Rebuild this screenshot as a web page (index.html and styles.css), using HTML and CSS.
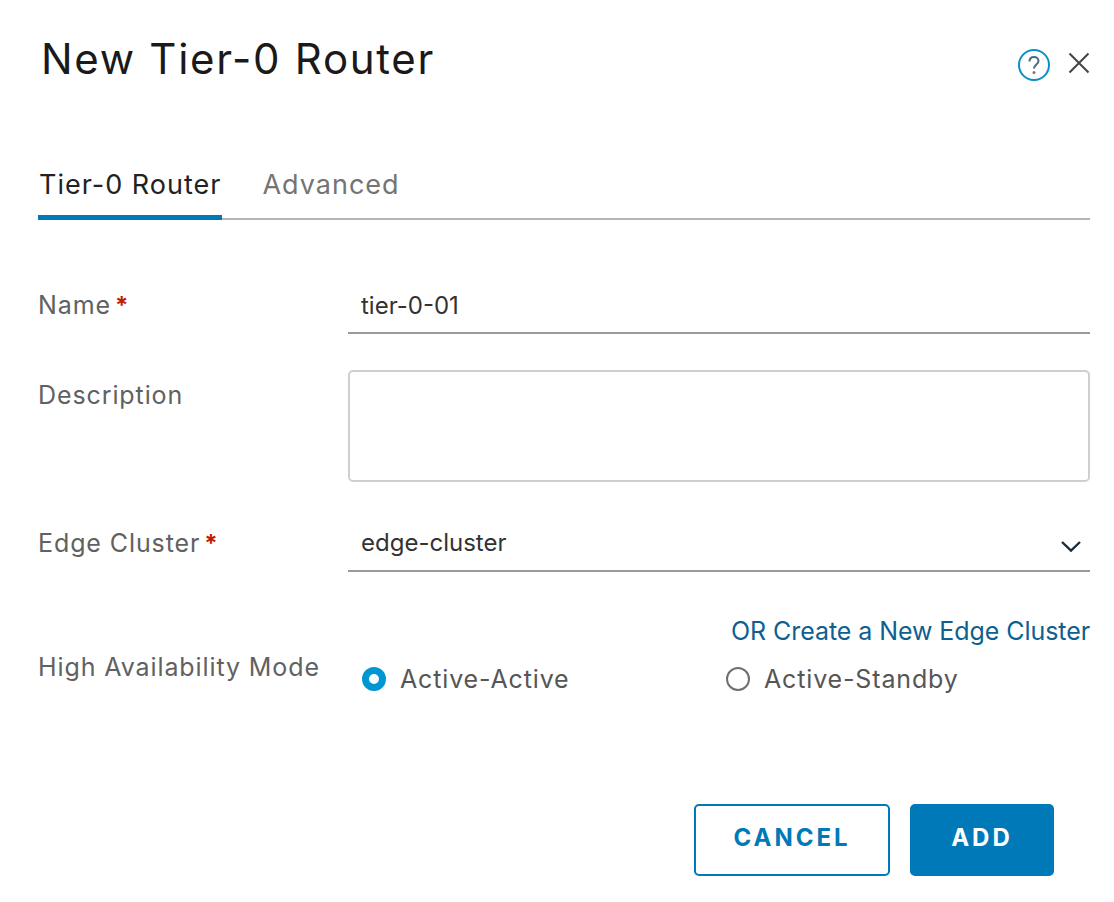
FILE: index.html
```html
<!DOCTYPE html>
<html lang="en">
<head>
    <meta charset="UTF-8">
    <title>New Tier-0 Router</title>
    <link rel="stylesheet" href="styles.css">
</head>
<body>
    <div class="modal">
        <div class="modal-header">
            <h1>New Tier-0 Router</h1>
            <div class="header-icons">
                <svg class="help-icon" width="34" height="34" viewBox="0 0 34 34" fill="none">
                    <circle cx="17" cy="17" r="15" stroke="#0a8fc9" stroke-width="2"/>
                    <path d="M12.5 13.5c0-3 2-4.500 4.500-4.500s4.500 1.600 4.500 4c0 3.500-4.500 3.500-4.500 7.500" stroke="#4a6a80" stroke-width="2"/>
                    <circle cx="17" cy="24.500" r="1.500" fill="#8a6a90"/>
                </svg>
                <svg class="close-icon" width="24" height="24" viewBox="0 0 24 24" fill="none">
                    <path d="M2.500 2.500l19 19M21.500 2.500l-19 19" stroke="#444" stroke-width="2"/>
                </svg>
            </div>
        </div>

        <div class="tabs">
            <div class="tab active">Tier-0 Router</div>
            <div class="tab">Advanced</div>
        </div>

        <form class="router-form">
            <div class="form-row name-row">
                <label>Name<span class="req">*</span></label>
                <div class="field">tier-0-01</div>
            </div>
            <div class="form-row desc-row">
                <label>Description</label>
                <div class="textarea"></div>
            </div>
            <div class="form-row cluster-row">
                <label>Edge Cluster<span class="req">*</span></label>
                <div class="field select-field">
                    <span>edge-cluster</span>
                    <svg width="22" height="14" viewBox="0 0 22 14" fill="none">
                        <path d="M2 3l9 8.500L20 3" stroke="#1c2a38" stroke-width="2.400"/>
                    </svg>
                </div>
            </div>
            <div class="create-link"><a>OR Create a New Edge Cluster</a></div>
            <div class="form-row ha-row">
                <label>High Availability Mode</label>
                <div class="radio-group">
                    <div class="radio-item first">
                        <span class="radio checked"></span>
                        <span>Active-Active</span>
                    </div>
                    <div class="radio-item">
                        <span class="radio"></span>
                        <span>Active-Standby</span>
                    </div>
                </div>
            </div>
            <div class="buttons">
                <button type="button" class="btn btn-outline">CANCEL</button>
                <button type="button" class="btn btn-primary">ADD</button>
            </div>
        </form>
    </div>
</body>
</html>
```

FILE: styles.css
```css
* {
    box-sizing: border-box;
    margin: 0;
    padding: 0;
}

body {
    font-family: 'Inter', 'Noto Sans', sans-serif;
    background-color: #ffffff;
    color: #565656;
}

.modal {
    width: 1114px;
    height: 902px;
    padding: 30px 24px 0 38px;
}

/* Header */
.modal-header {
    display: flex;
    justify-content: space-between;
    align-items: flex-start;
    height: 124px;
}

h1 {
    font-size: 42px;
    font-weight: 400;
    line-height: 58px;
    letter-spacing: 1.7px;
    color: #1a1a1a;
    padding-left: 3px;
}

.header-icons {
    display: flex;
    align-items: center;
    gap: 16px;
    margin-top: 18px;
    margin-right: -1px;
}

.close-icon {
    margin-top: -4px;
}

/* Tabs */
.tabs {
    display: flex;
    gap: 40px;
    height: 66px;
    border-bottom: 2px solid #b5b5b5;
}

.tab {
    font-size: 27px;
    line-height: 62px;
    letter-spacing: 1px;
    color: #747474;
}

.tab.active {
    color: #222222;
    height: 66px;
    padding: 0 1px;
    border-bottom: 5px solid #0079b8;
}

/* Form */
.router-form {
    padding-top: 64px;
}

.form-row {
    display: flex;
}

label {
    width: 310px;
    flex-shrink: 0;
    font-size: 25px;
    line-height: 42px;
    letter-spacing: 0.9px;
    color: #616161;
}

.req {
    color: #c21d00;
    margin-left: 4px;
    font-size: 24px;
    font-weight: 700;
}

.field {
    flex: 1;
    height: 50px;
    padding: 0 13px;
    font-size: 24px;
    line-height: 44px;
    color: #333333;
    border-bottom: 2px solid #9a9a9a;
}

.select-field {
    display: flex;
    justify-content: space-between;
    align-items: center;
    padding-right: 8px;
}

.select-field span {
    margin-top: -6px;
}

.desc-row {
    margin-top: 36px;
}

.desc-row label {
    padding-top: 4px;
}

.textarea {
    flex: 1;
    height: 112px;
    border: 2px solid #cfcfcf;
    border-radius: 5px;
}

.cluster-row {
    margin-top: 40px;
}

.create-link {
    text-align: right;
    margin-top: 37px;
    font-size: 25px;
    line-height: 44px;
    letter-spacing: -0.07px;
    color: #0f5f8f;
}

.ha-row {
    margin-top: -8px;
}

.ha-row label {
    padding-top: 1px;
}

.radio-group {
    display: flex;
    flex: 1;
    padding-top: 12px;
}

.radio-item {
    display: flex;
    align-items: center;
    gap: 14px;
    height: 44px;
    font-size: 25px;
    letter-spacing: 0.85px;
    color: #565656;
}

.radio-item.first {
    width: 378px;
    padding-left: 14px;
}

.radio {
    width: 24px;
    height: 24px;
    border: 2px solid #6f6f6f;
    border-radius: 50%;
}

.radio.checked {
    border: 7px solid #0095d3;
}

/* Buttons */
.buttons {
    display: flex;
    justify-content: flex-end;
    gap: 20px;
    margin-top: 103px;
    padding-right: 36px;
}

.btn {
    height: 72px;
    padding-bottom: 6px;
    border-radius: 5px;
    font-family: inherit;
    font-size: 24px;
    font-weight: 700;
    letter-spacing: 3px;
}

.btn-outline {
    width: 196px;
    background-color: #ffffff;
    color: #0079b8;
    border: 2px solid #0079b8;
}

.btn-primary {
    width: 144px;
    background-color: #0079b8;
    color: #ffffff;
    border: none;
}
```
